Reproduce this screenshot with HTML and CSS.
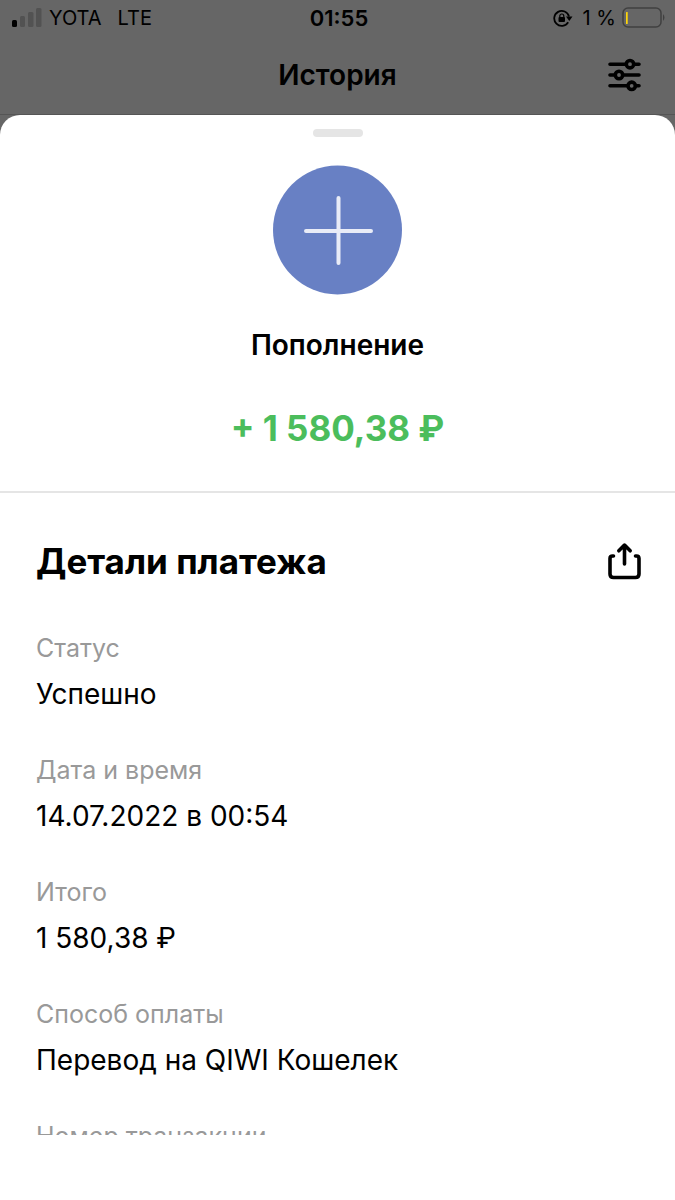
FILE: index.html
```html
<!DOCTYPE html>
<html lang="ru">
<head>
<meta charset="utf-8">
<meta name="viewport" content="width=device-width, initial-scale=1">
<title>История</title>
<link rel="stylesheet" href="styles.css">
</head>
<body>
<div class="screen">
  <div class="status-bar">
    <div class="carrier">
      <svg class="signal" width="31" height="20" viewBox="0 0 31 20" aria-hidden="true"><rect x="0" y="12" width="5" height="7" rx="1.5" fill="#000"/><rect x="8" y="8" width="5" height="11" rx="1.5" fill="#525252"/><rect x="16" y="4" width="5.5" height="15" rx="1.5" fill="#525252"/><rect x="24" y="0" width="5.5" height="19" rx="1.5" fill="#525252"/></svg>
      <span>YOTA</span><span class="network">LTE</span>
    </div>
    <time class="clock">01:55</time>
    <div class="power">
      <svg width="20" height="18" viewBox="0 0 20 18" fill="none" stroke="#000" stroke-width="1.8" aria-hidden="true"><path d="M15.2 13.2A7.500 7.500 0 1 1 16 7.500"/><path d="M13 7.500h6.500l-3.200 4.500z" fill="#000" stroke="none"/><rect x="5.500" y="8" width="6.500" height="5" rx="1" fill="#000" stroke="none"/><path d="M6.800 8.500V7a2 2 0 0 1 4 0v1.500" stroke-width="1.200"/></svg>
      <span class="charge">1 %</span>
      <svg width="44" height="22" viewBox="0 0 44 22" aria-hidden="true"><rect x="1" y="1" width="38" height="19" rx="5" fill="none" stroke="#404040" stroke-width="1.5"/><rect x="4" y="5" width="1.7" height="12" rx=".5" fill="#ffd60a"/><path d="M41 7q3 3.500 0 7z" fill="#404040"/></svg>
    </div>
  </div>
  <header class="header">
    <h1 class="title">История</h1>
    <button class="icon-button" type="button" aria-label="Фильтры"><svg width="34" height="34" viewBox="0 0 34 34" fill="none" stroke="#000" stroke-width="3.6" stroke-linecap="round" aria-hidden="true"><path d="M3 6.200h16m8 0h5M3 17h5m8 0h16M3 27.800h17.500m8 0h3.500"/><circle cx="23" cy="6.200" r="3.700"/><circle cx="12" cy="17" r="3.700"/><circle cx="24.700" cy="27.800" r="3.700"/></svg></button>
  </header>
  <main class="sheet">
    <section class="summary">
      <div class="grabber"></div>
      <svg class="badge" width="130" height="130" viewBox="0 0 130 130" aria-hidden="true"><circle cx="64.500" cy="65" r="64.500" fill="#6880c4"/><path d="M65.500 33v65M33 66h65" stroke="#e9ecf7" stroke-width="4" stroke-linecap="round"/></svg>
      <h2 class="operation">Пополнение</h2>
      <p class="amount">+ 1 580,38 ₽</p>
    </section>
    <section class="details">
      <div class="details-head">
        <h2 class="details-title">Детали платежа</h2>
        <button class="icon-button" type="button" aria-label="Поделиться"><svg width="34" height="38" viewBox="0 0 34 38" fill="none" stroke="#000" stroke-width="3.6" stroke-linecap="round" stroke-linejoin="round" aria-hidden="true"><path d="M6.500 14H5.500Q3 14 3 16.500V32q0 3.500 3.500 3.500h22q3.500 0 3.500-3.500V16.500Q32 14 29.500 14h-1M17.500 22V3.500M11.800 8.800l5.700-5.700 5.700 5.700"/></svg></button>
      </div>
      <dl class="fields">
        <div class="field"><dt>Статус</dt><dd>Успешно</dd></div>
        <div class="field"><dt>Дата и время</dt><dd>14.07.2022 в 00:54</dd></div>
        <div class="field"><dt>Итого</dt><dd>1 580,38 ₽</dd></div>
        <div class="field"><dt>Способ оплаты</dt><dd>Перевод на QIWI Кошелек</dd></div>
        <div class="field"><dt>Номер транзакции</dt></div>
      </dl>
    </section>
  </main>
</div>
</body>
</html>
```

FILE: styles.css
```css
* { box-sizing: border-box; }
body { margin: 0; background: #666; color: #000; font-family: Inter, "Noto Sans", sans-serif; }
h1, h2, p, dl, dd { margin: 0; }
svg { display: block; flex: none; }
.screen { height: 100vh; display: flex; flex-direction: column; overflow: hidden; }
.status-bar { display: grid; grid-template-columns: 1fr auto 1fr; align-items: center; height: 36px; padding: 0 9px 0 12px; font-size: 20px; }
.carrier, .power { display: flex; align-items: center; gap: 6px; }
.power { justify-content: flex-end; }
.charge { margin-left: 4px; }
.network { margin-left: 10px; }
.clock { font-size: 22px; font-weight: 600; }
.header { display: grid; grid-template-columns: 1fr auto 1fr; align-items: center; height: 79px; padding: 0 34px; border-bottom: 1px solid #555; }
.title { grid-column: 2; font-size: 28px; line-height: 32px; font-weight: 600; }
.icon-button { justify-self: end; padding: 0; border: 0; background: none; color: #000; cursor: pointer; }
.sheet { flex: 1; min-height: 0; display: flex; flex-direction: column; padding-bottom: 65px; border-radius: 20px 20px 0 0; background: #fff; }
.summary { display: flex; flex-direction: column; align-items: center; padding: 14px 0 39px; border-bottom: 2px solid #e5e5e5; }
.grabber { width: 50px; height: 8px; border-radius: 4px; background: #e5e5e5; }
.badge { margin-top: 28px; }
.operation { margin-top: 34px; font-size: 28px; line-height: 32px; font-weight: 600; }
.amount { margin-top: 43px; font-size: 35px; line-height: 48px; font-weight: 700; color: #4bbd5c; }
.details { flex: 1; min-height: 0; overflow: hidden; padding: 44px 34px 0 36px; }
.details-head { display: flex; align-items: center; justify-content: space-between; height: 48px; }
.details-title { font-size: 35px; line-height: 48px; font-weight: 700; }
.fields { display: flex; flex-direction: column; gap: 40px; padding-top: 47px; }
.field { display: flex; flex-direction: column; gap: 10px; }
.field dt { font-size: 25px; line-height: 32px; color: #999; }
.field dd { font-size: 28px; line-height: 40px; }
```
